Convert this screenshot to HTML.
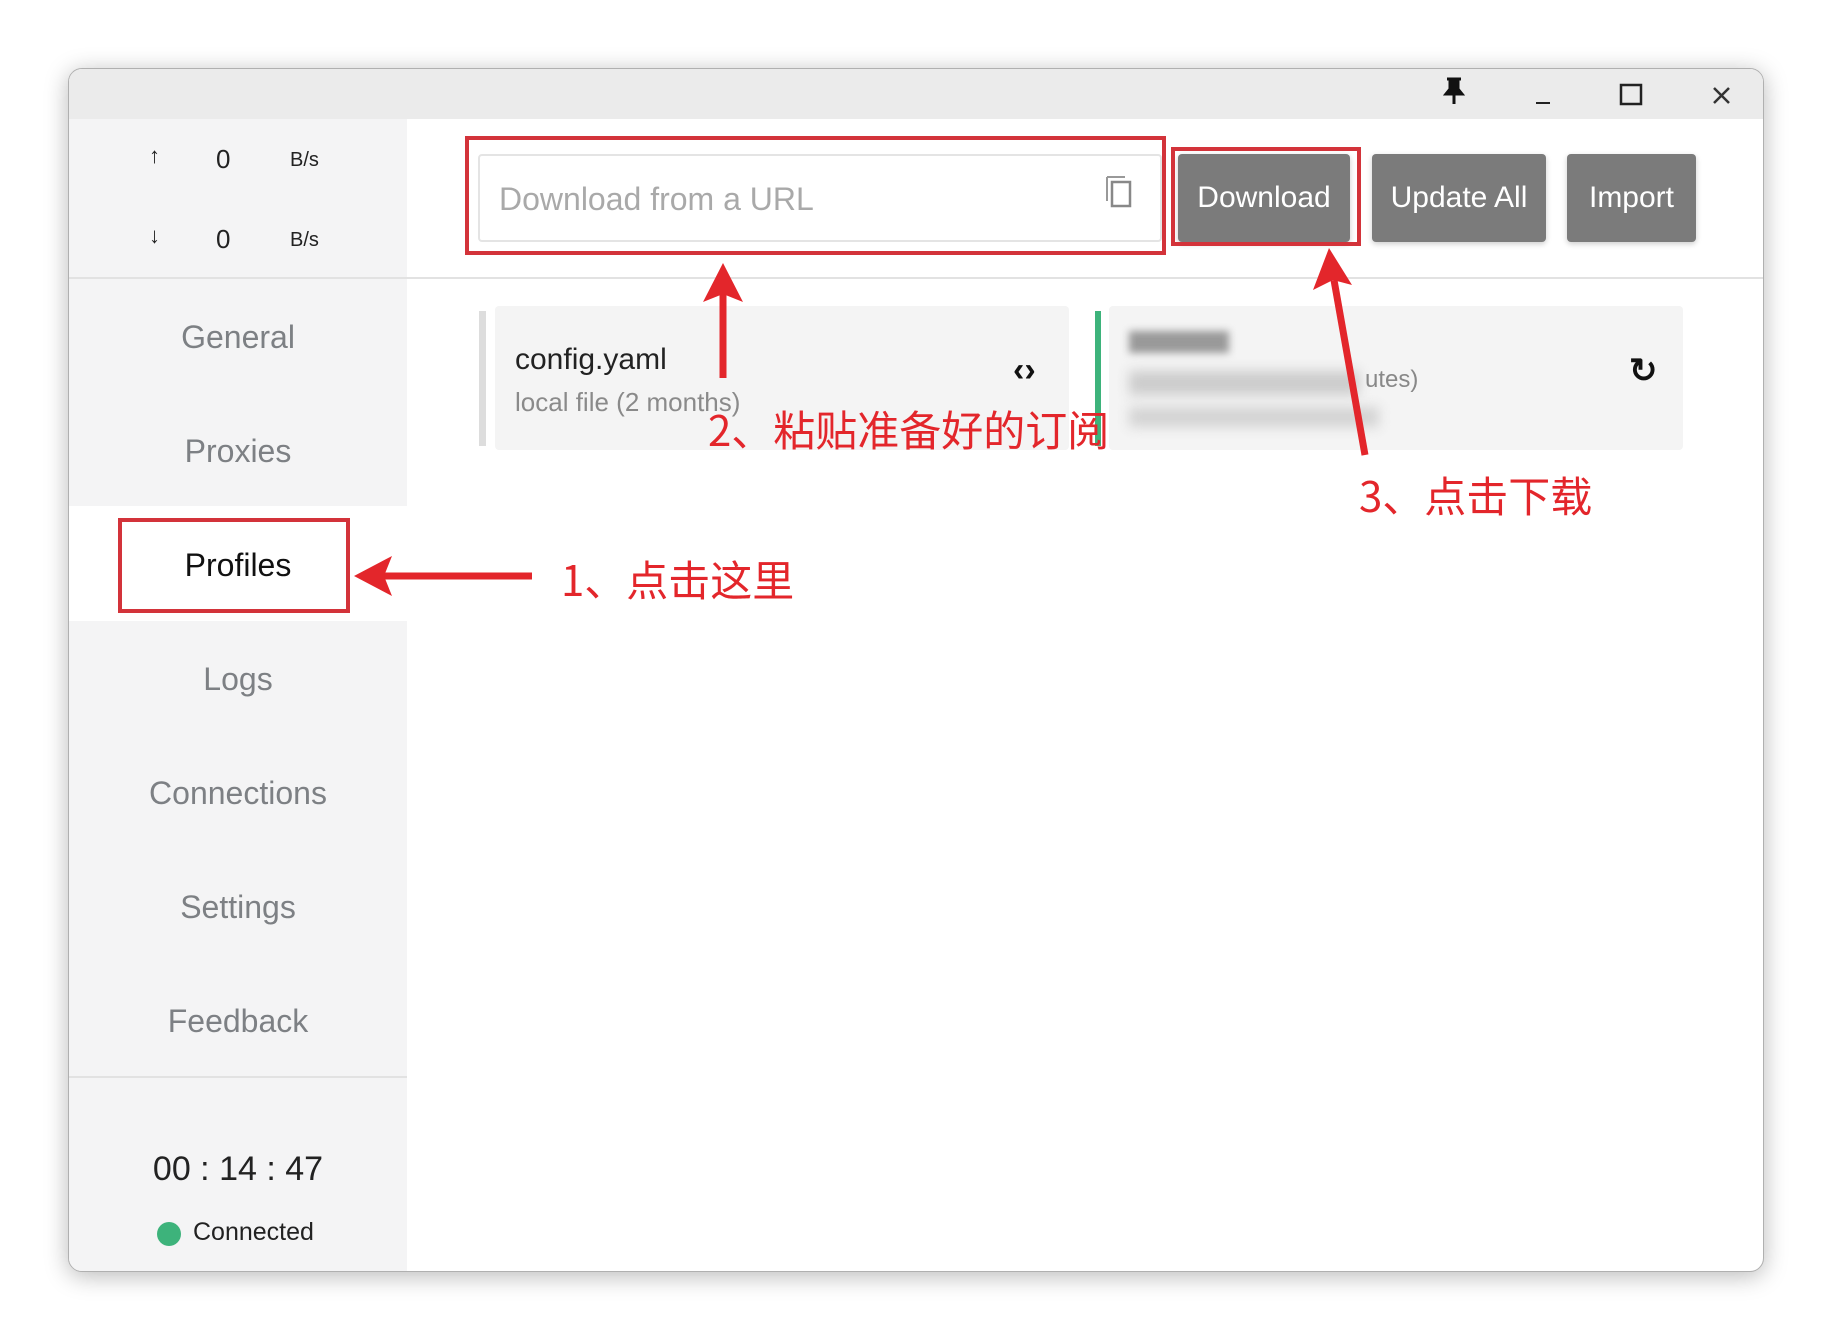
<!DOCTYPE html>
<html><head><meta charset="utf-8"><style>
*{margin:0;padding:0;box-sizing:border-box}
body{width:1834px;height:1340px;background:#fff;position:relative;overflow:hidden;font-family:"Liberation Sans","Noto Sans CJK SC",sans-serif}
.win{position:absolute;left:68px;top:68px;width:1696px;height:1204px;border-radius:14px;background:#fff;box-shadow:0 4px 24px rgba(0,0,0,.28);overflow:hidden;border:1px solid #b0b0b0}
.title{position:absolute;left:0;top:0;width:100%;height:50px;background:#ebebeb}
.side{position:absolute;left:0;top:50px;width:338px;bottom:0;background:#f4f4f5}
.abs{position:absolute}
.nav{position:absolute;left:0;width:338px;text-align:center;font-size:32px;color:#7d8084}
.red{color:#e3262b;font-family:"Noto Sans CJK SC","WenQuanYi Zen Hei",sans-serif;font-size:42px;position:absolute;white-space:nowrap}
.btn{position:absolute;top:153px;height:88px;background:#7b7b7b;color:#fff;font-size:30px;display:flex;align-items:center;justify-content:center;border-radius:4px;box-shadow:0 2px 6px rgba(0,0,0,.2)}
</style></head><body>
<div class="win">
 <div class="title"></div>
 <svg class="abs" style="left:1370px;top:8px" width="330" height="40">
  <path d="M8 2h14M11 2v10l-4 5h16l-4-5V2M15 17v10" stroke="#111" stroke-width="3" fill="#111"/>
  <line x1="97" y1="26" x2="111" y2="26" stroke="#222" stroke-width="2"/>
  <rect x="182" y="8" width="20" height="19" fill="none" stroke="#222" stroke-width="2.5"/>
  <path d="M275 11l15 15M290 11l-15 15" stroke="#333" stroke-width="2.5"/>
 </svg>
 <div class="side"></div>
 <div class="abs" style="left:0;top:208px;width:1696px;height:2px;background:#e2e2e2"></div>
 <div class="abs" style="left:0;top:437px;width:338px;height:115px;background:#fff"></div>
 <div class="abs" style="left:0;top:1007px;width:338px;height:2px;background:#e2e2e2"></div>
 <div class="abs" style="left:80px;top:74px;font-size:22px;color:#222">↑</div>
 <div class="abs" style="left:147px;top:75px;font-size:26px;color:#222">0</div>
 <div class="abs" style="left:221px;top:80px;font-size:20px;color:#222">B/s</div>
 <div class="abs" style="left:80px;top:154px;font-size:22px;color:#222">↓</div>
 <div class="abs" style="left:147px;top:155px;font-size:26px;color:#222">0</div>
 <div class="abs" style="left:221px;top:160px;font-size:20px;color:#222">B/s</div>
 <div class="nav" style="top:250px">General</div>
 <div class="nav" style="top:364px">Proxies</div>
 <div class="nav" style="top:478px;color:#111">Profiles</div>
 <div class="nav" style="top:592px">Logs</div>
 <div class="nav" style="top:706px">Connections</div>
 <div class="nav" style="top:820px">Settings</div>
 <div class="nav" style="top:934px">Feedback</div>
 <div class="abs" style="left:0;width:338px;text-align:center;top:1081px;font-size:34px;color:#222">00 : 14 : 47</div>
 <div class="abs" style="left:88px;top:1153px;width:24px;height:24px;border-radius:50%;background:#3db37b"></div>
 <div class="abs" style="left:124px;top:1149px;font-size:25px;color:#222">Connected</div>
 <div class="abs" style="left:409px;top:85px;width:684px;height:88px;border:2px solid #e4e4e4;border-radius:4px;background:#fff"></div>
 <div class="abs" style="left:430px;top:112px;font-size:32px;color:#a9a9a9">Download from a URL</div>
 <svg class="abs" style="left:1034px;top:104px" width="34" height="38"><path d="M4 4v24M4 4h18" stroke="#999" stroke-width="2" fill="none"/><rect x="9" y="9" width="18" height="24" fill="none" stroke="#888" stroke-width="2.5"/></svg>
 <div class="btn" style="left:1109px;width:172px;top:85px">Download</div>
 <div class="btn" style="left:1303px;width:174px;top:85px">Update All</div>
 <div class="btn" style="left:1498px;width:129px;top:85px">Import</div>
 <div class="abs" style="left:410px;top:242px;width:7px;height:135px;background:#ddd"></div>
 <div class="abs" style="left:426px;top:237px;width:574px;height:144px;background:#f4f4f4;border-radius:4px"></div>
 <div class="abs" style="left:446px;top:274px;font-size:30px;color:#222">config.yaml</div>
 <div class="abs" style="left:446px;top:318px;font-size:26px;color:#8a8a8a">local file (2 months)</div>
 <div class="abs" style="left:944px;top:282px;font-size:34px;color:#111;font-weight:bold">‹›</div>
 <div class="abs" style="left:1026px;top:242px;width:6px;height:135px;background:#3db37b"></div>
 <div class="abs" style="left:1040px;top:237px;width:574px;height:144px;background:#f4f4f4;border-radius:4px"></div>
 <div class="abs" style="left:1060px;top:262px;width:100px;height:22px;background:#999;filter:blur(4px)"></div>
 <div class="abs" style="left:1060px;top:302px;width:230px;height:24px;background:#ccc;filter:blur(6px)"></div>
 <div class="abs" style="left:1060px;top:338px;width:250px;height:20px;background:#d3d3d3;filter:blur(6px)"></div>
 <div class="abs" style="left:1296px;top:297px;font-size:24px;color:#888">utes)</div>
 <div class="abs" style="left:1560px;top:282px;font-size:34px;color:#111;font-weight:bold">↻</div>
</div>
<div class="abs" style="left:465px;top:136px;width:701px;height:119px;border:4px solid #d3333a"></div>
<div class="abs" style="left:1171px;top:147px;width:190px;height:99px;border:4px solid #d3333a"></div>
<div class="abs" style="left:118px;top:518px;width:232px;height:95px;border:4px solid #d3333a"></div>
<svg class="abs" style="left:0;top:0" width="1834" height="1340">
 <g fill="#e3262b" stroke="#e3262b">
  <line x1="532" y1="576" x2="380" y2="576" stroke-width="7"/>
  <polygon points="354,576 392,556 384,576 392,596" stroke="none"/>
  <line x1="723" y1="378" x2="723" y2="290" stroke-width="7"/>
  <polygon points="723,263 703,302 723,294 743,302" stroke="none"/>
  <line x1="1365" y1="455" x2="1334" y2="280" stroke-width="7"/>
  <polygon points="1329,248 1313,290 1333,280 1352,285" stroke="none"/>
 </g>
</svg>
<div class="red" style="left:561px;top:548px">1、点击这里</div>
<div class="red" style="left:708px;top:398px;font-size:42px">2、粘贴准备好的订阅</div>
<div class="red" style="left:1359px;top:464px">3、点击下载</div>
</body></html>
